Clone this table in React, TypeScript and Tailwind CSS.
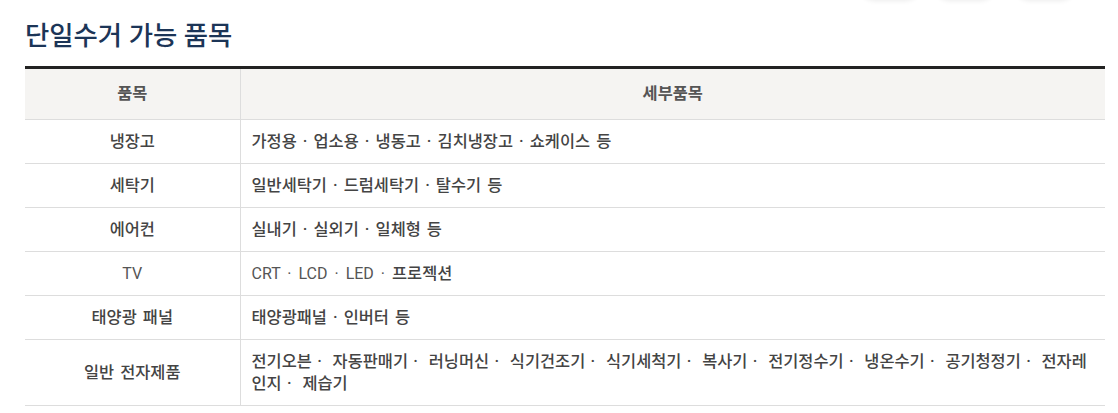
import React from "react";

const rows: { name: React.ReactNode; key: string; detail: React.ReactNode }[] = [
  { key: "a", name: "냉장고", detail: "가정용 · 업소용 · 냉동고 · 김치냉장고 · 쇼케이스 등" },
  { key: "b", name: "세탁기", detail: "일반세탁기 · 드럼세탁기 · 탈수기 등" },
  { key: "c", name: "에어컨", detail: "실내기 · 실외기 · 일체형 등" },
  {
    key: "d",
    name: <span className="text-[16px] font-normal text-[#555]">TV</span>,
    detail: (
      <>
        <span className="text-[16px] font-normal text-[#555] [word-spacing:3px]">CRT · LCD · LED · </span>프로젝션
      </>
    ),
  },
  { key: "e", name: "태양광 패널", detail: "태양광패널 · 인버터 등" },
  {
    key: "f",
    name: "일반 전자제품",
    detail: (
      <span className="[word-spacing:1.3px]">
        {"전기오븐 ·\u00a0 자동판매기 ·\u00a0 러닝머신 ·\u00a0 식기건조기 ·\u00a0 식기세척기 ·\u00a0 복사기 ·\u00a0 전기정수기 ·\u00a0 냉온수기 ·\u00a0 공기청정기 ·\u00a0 전자레인지 ·\u00a0 제습기"}
      </span>
    ),
  },
];

export default function App() {
  return (
    <div
      className="relative w-[1118px] h-[413px] overflow-hidden bg-white"
      style={{ fontFamily: 'Roboto, "Noto Sans CJK KR", "Noto Sans", sans-serif' }}
    >
      <div className="absolute top-[-30px] left-[860px] w-[60px] h-[30px] rounded-full shadow-[0_1px_5px_rgba(0,0,0,0.08)] bg-white" />
      <div className="absolute top-[-30px] left-[935px] w-[60px] h-[30px] rounded-full shadow-[0_1px_5px_rgba(0,0,0,0.08)] bg-white" />
      <div className="absolute top-[-30px] left-[1015px] w-[60px] h-[30px] rounded-full shadow-[0_1px_5px_rgba(0,0,0,0.08)] bg-white" />
      <div className="px-[25px] pt-[18px]">
        <h2 className="text-[26.4px] leading-[36px] font-medium text-[#1c3557]">단일수거 가능 품목</h2>
        <table className="mt-[12px] w-[1080px] border-collapse border-t-[3px] border-[#222] text-[16.4px] leading-[22px] text-[#444] font-medium [word-spacing:2px]">
          <thead>
            <tr className="bg-[#f5f4f2] border-b border-[#ddd]">
              <th className="w-[215px] h-[52px] font-bold text-[#555] text-center border-r border-[#ddd]">품목</th>
              <th className="h-[52px] font-bold text-[#555] text-center">세부품목</th>
            </tr>
          </thead>
          <tbody>
            {rows.map((r) => (
              <tr key={r.key} className="border-b border-[#ddd]">
                <td className="text-center py-[10.5px] border-r border-[#ddd] align-middle">{r.name}</td>
                <td className="pl-[11px] pr-[6px] py-[10.5px] align-middle">{r.detail}</td>
              </tr>
            ))}
          </tbody>
        </table>
      </div>
    </div>
  );
}
